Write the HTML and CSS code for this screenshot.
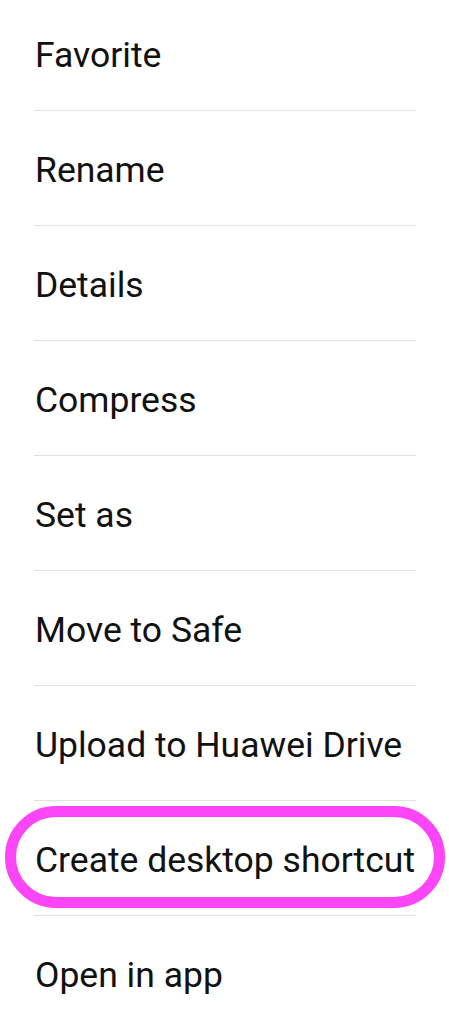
FILE: index.html
```html
<!DOCTYPE html>
<html lang="en">

<head>
  <meta charset="UTF-8" />
  <meta name="viewport" content="width=device-width, initial-scale=1.0" />
  <title>File options</title>
  <link rel="stylesheet" href="styles.css">
</head>

<body>
  <ul class="menu">
    <li class="menu-item">Favorite</li>
    <li class="menu-item">Rename</li>
    <li class="menu-item">Details</li>
    <li class="menu-item">Compress</li>
    <li class="menu-item">Set as</li>
    <li class="menu-item">Move to Safe</li>
    <li class="menu-item">Upload to Huawei Drive</li>
    <li class="menu-item highlighted">
      Create desktop shortcut
      <span class="ring"></span>
    </li>
    <li class="menu-item">Open in app</li>
  </ul>
</body>

</html>
```

FILE: styles.css
```css
* {
  box-sizing: border-box;
}

body {
  margin: 0;
  padding: 0;
  background-color: #ffffff;
  font-family: Roboto, 'Noto Sans', sans-serif;
  color: #111111;
  overflow: hidden;
}

.menu {
  list-style: none;
  margin: -4px 33px 0 34px;
  padding: 0;
}

.menu-item {
  position: relative;
  display: flex;
  align-items: center;
  height: 115px;
  padding: 3px 0 0 1px;
  font-size: 35.5px;
  border-bottom: 1px solid #e2e2e2;
}

.menu-item:last-child {
  border-bottom: none;
}

/* annotation drawn over the row */
.ring {
  position: absolute;
  left: -29px;
  top: 5px;
  width: 440px;
  height: 102px;
  border: 11px solid #fb45f6;
  border-radius: 51px;
  pointer-events: none;
}
```
